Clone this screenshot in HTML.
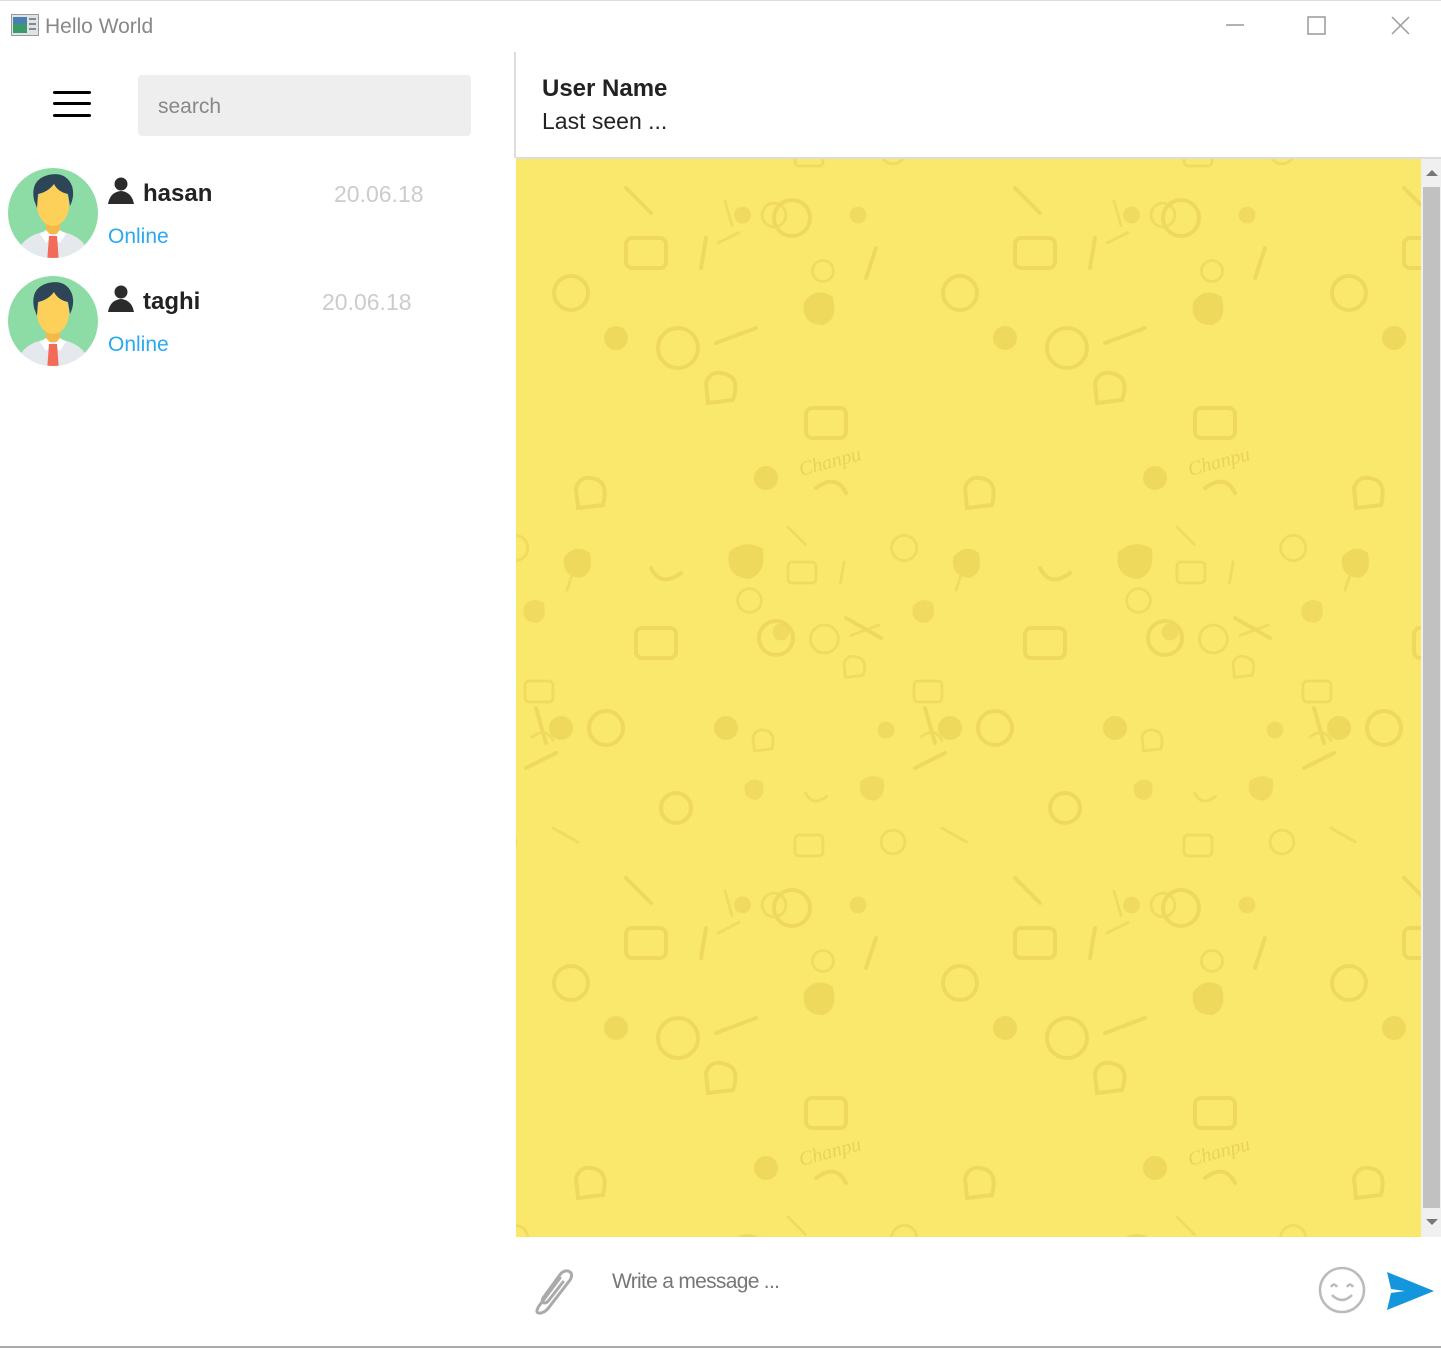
<!DOCTYPE html>
<html><head><meta charset="utf-8"><style>
body{margin:0;width:1441px;height:1348px;background:#fff;position:relative;overflow:hidden;font-family:"Liberation Sans",sans-serif}
.a{position:absolute}
</style></head><body>
<div class="a" style="left:0;top:0;width:1441px;height:1px;background:#ddd"></div>
<svg class="a" style="left:11px;top:14px" width="29" height="23"><rect x="0.5" y="0.5" width="27" height="21" fill="#dfe3e6" stroke="#999"/><rect x="2" y="3" width="14" height="16" fill="#3a9a6a"/><rect x="2" y="3" width="14" height="7" fill="#4a7fb0"/><rect x="18" y="4" width="7" height="2" fill="#888"/><rect x="18" y="9" width="7" height="2" fill="#888"/><rect x="18" y="14" width="7" height="2" fill="#888"/></svg>
<div class="a" style="left:45px;top:15px;font-size:21px;color:#888">Hello World</div>
<svg class="a" style="left:1220px;top:10px" width="200" height="32" fill="none" stroke="#999" stroke-width="1.5"><line x1="6" y1="15" x2="24" y2="15"/><rect x="88" y="7" width="17" height="17"/><line x1="172" y1="7" x2="189" y2="24"/><line x1="189" y1="7" x2="172" y2="24"/></svg>
<svg class="a" style="left:53px;top:91px" width="38" height="28"><rect y="0" width="38" height="3" rx="1.5"/><rect y="11" width="38" height="3" rx="1.5"/><rect y="23" width="38" height="3" rx="1.5"/></svg>
<div class="a" style="left:138px;top:75px;width:333px;height:61px;background:#eee;border-radius:4px"></div>
<div class="a" style="left:158px;top:95px;font-size:21px;color:#888">search</div>

<svg width="0" height="0" style="position:absolute"><defs>
<g id="av"><clipPath id="cc"><circle cx="45" cy="45" r="45"/></clipPath><circle cx="45" cy="45" r="45" fill="#8ddca6"/><g clip-path="url(#cc)"><path d="M10 85 Q14 66 45 62 Q76 66 80 85 L80 95 L10 95Z" fill="#e5e8ec"/><rect x="38" y="50" width="14" height="16" fill="#f5b94a"/><path d="M38 62 L45 70 L52 62 L58 66 L52 75 L45 68 L38 75 L32 66Z" fill="#fff"/><path d="M41 68 L49 68 L51 95 L39 95Z" fill="#f26b58"/><ellipse cx="45" cy="37" rx="16" ry="21" fill="#fdd05a"/><path d="M26 32 Q22 12 40 7 Q58 3 64 18 Q67 28 62 38 L60 26 Q50 24 46 16 Q40 24 30 26 L29 40Z" fill="#2e4558"/></g></g>
<g id="pi"><circle cx="13" cy="7" r="6.5" fill="#2b2b2b"/><path d="M0 27 Q2 15 13 14 Q24 15 26 27Z" fill="#2b2b2b"/></g>
</defs></svg>
<svg class="a" style="left:8px;top:168px" width="90" height="90"><use href="#av"/></svg>
<svg class="a" style="left:108px;top:177px" width="27" height="28"><use href="#pi"/></svg>
<div class="a" style="left:143px;top:180px;font-size:24px;font-weight:bold;color:#222">hasan</div>
<div class="a" style="left:334px;top:181px;font-size:23px;color:#ccc">20.06.18</div>
<div class="a" style="left:108px;top:225px;font-size:21px;color:#2aa9f0">Online</div>
<svg class="a" style="left:8px;top:276px" width="90" height="90"><use href="#av"/></svg>
<svg class="a" style="left:108px;top:285px" width="27" height="28"><use href="#pi"/></svg>
<div class="a" style="left:143px;top:288px;font-size:24px;font-weight:bold;color:#222">taghi</div>
<div class="a" style="left:322px;top:289px;font-size:23px;color:#ccc">20.06.18</div>
<div class="a" style="left:108px;top:333px;font-size:21px;color:#2aa9f0">Online</div>

<div class="a" style="left:514px;top:52px;width:2px;height:106px;background:#ddd"></div>
<div class="a" style="left:516px;top:157px;width:925px;height:2px;background:#ddd"></div>
<div class="a" style="left:542px;top:75px;font-size:24px;font-weight:bold;color:#222">User Name</div>
<div class="a" style="left:542px;top:108px;font-size:23px;color:#222">Last seen ...</div>

<svg class="a" style="left:516px;top:159px" width="905" height="1078">
<defs>
<g id="sh" fill="#ecd55a" stroke="#ecd55a" stroke-width="4" stroke-linecap="round">
<circle cx="55" cy="125" r="17" fill="none"/><circle cx="162" cy="180" r="20" fill="none"/><circle cx="276" cy="50" r="18" fill="none"/>
<path d="M290 135 q10 -14 25 -5 q5 20 -8 25 q-20 0 -17 -20z"/><path d="M215 385 q14 -12 30 -3 q3 22 -12 27 q-22 -2 -18 -24z"/><path d="M50 390 q10 -12 22 -4 q4 18 -8 22 q-16 -2 -14 -18z"/>
<path d="M60 320 q5 -15 22 -8 q10 5 5 25 l-25 3z" fill="none"/><path d="M190 215 q5 -15 22 -8 q12 5 5 25 l-25 3z" fill="none"/>
<line x1="110" y1="20" x2="135" y2="45"/><line x1="20" y1="540" x2="30" y2="575"/><line x1="190" y1="70" x2="185" y2="100"/><line x1="360" y1="80" x2="350" y2="110"/>
<circle cx="100" cy="170" r="10"/><circle cx="250" cy="310" r="10"/><circle cx="45" cy="560" r="10"/><circle cx="210" cy="560" r="10"/>
<line x1="200" y1="175" x2="240" y2="160"/><line x1="10" y1="600" x2="40" y2="585"/><line x1="330" y1="450" x2="365" y2="470"/>
<circle cx="260" cy="470" r="17" fill="none"/><circle cx="90" cy="560" r="17" fill="none"/><circle cx="160" cy="640" r="15" fill="none"/>
<rect x="110" y="70" width="40" height="30" rx="6" fill="none"/><rect x="290" y="240" width="40" height="30" rx="6" fill="none"/><rect x="120" y="460" width="40" height="30" rx="6" fill="none"/>
<path d="M300 320 q20 -15 30 5" fill="none"/><path d="M135 400 q10 20 30 5" fill="none"/>
</g>
<pattern id="p" width="389" height="690" patternUnits="userSpaceOnUse" x="0" y="9">
<use href="#sh"/>
<use href="#sh" transform="translate(195 345) scale(0.7)" opacity="0.9"/>
<use href="#sh" transform="translate(-194 345) scale(0.7)" opacity="0.9"/>
<use href="#sh" transform="translate(195 -345) scale(0.7)" opacity="0.9"/>
<use href="#sh" transform="translate(-194 -345) scale(0.7)" opacity="0.9"/>
<text x="285" y="308" font-family="Liberation Serif" font-style="italic" font-size="20" fill="#e5cd55" transform="rotate(-15 285 308)">Chanpu</text>
</pattern></defs>
<rect width="905" height="1078" fill="#f9e86b"/><rect width="905" height="1078" fill="url(#p)" opacity="0.8"/>
</svg>
<div class="a" style="left:1421px;top:159px;width:20px;height:1078px;background:#f0f0f0"></div>
<div class="a" style="left:1423px;top:187px;width:17px;height:1021px;background:#c1c1c1"></div>
<svg class="a" style="left:1425px;top:168px" width="14" height="10"><path d="M1 8 L7 2 L13 8Z" fill="#777"/></svg>
<svg class="a" style="left:1425px;top:1217px" width="14" height="10"><path d="M1 2 L7 8 L13 2Z" fill="#777"/></svg>

<svg class="a" style="left:530px;top:1268px" width="52" height="48" fill="none" stroke="#aaa" stroke-width="3" stroke-linecap="round"><path d="M30 10 L9 38 Q4 46 11 45 Q16 44 20 38 L40 12 Q44 5 38 3 Q33 2 29 8 L13 30 Q11 34 14 35 Q17 35 19 32 L33 14"/></svg>
<div class="a" style="left:612px;top:1270px;font-size:21px;color:#777;letter-spacing:-0.7px">Write a message ...</div>
<svg class="a" style="left:1317px;top:1265px" width="50" height="50" fill="none" stroke="#bbb" stroke-width="2.5"><circle cx="25" cy="25" r="22"/><path d="M14 22 q3 -5 6 0 M30 22 q3 -5 6 0 M15 30 q10 10 20 0"/></svg>
<svg class="a" style="left:1385px;top:1270px" width="50" height="42"><path d="M2 2 L49 21 L2 40 L6 23 L20 21 L6 19Z" fill="#1396db"/></svg>
<div class="a" style="left:0;top:1346px;width:1441px;height:2px;background:#aaa"></div>
</body></html>
